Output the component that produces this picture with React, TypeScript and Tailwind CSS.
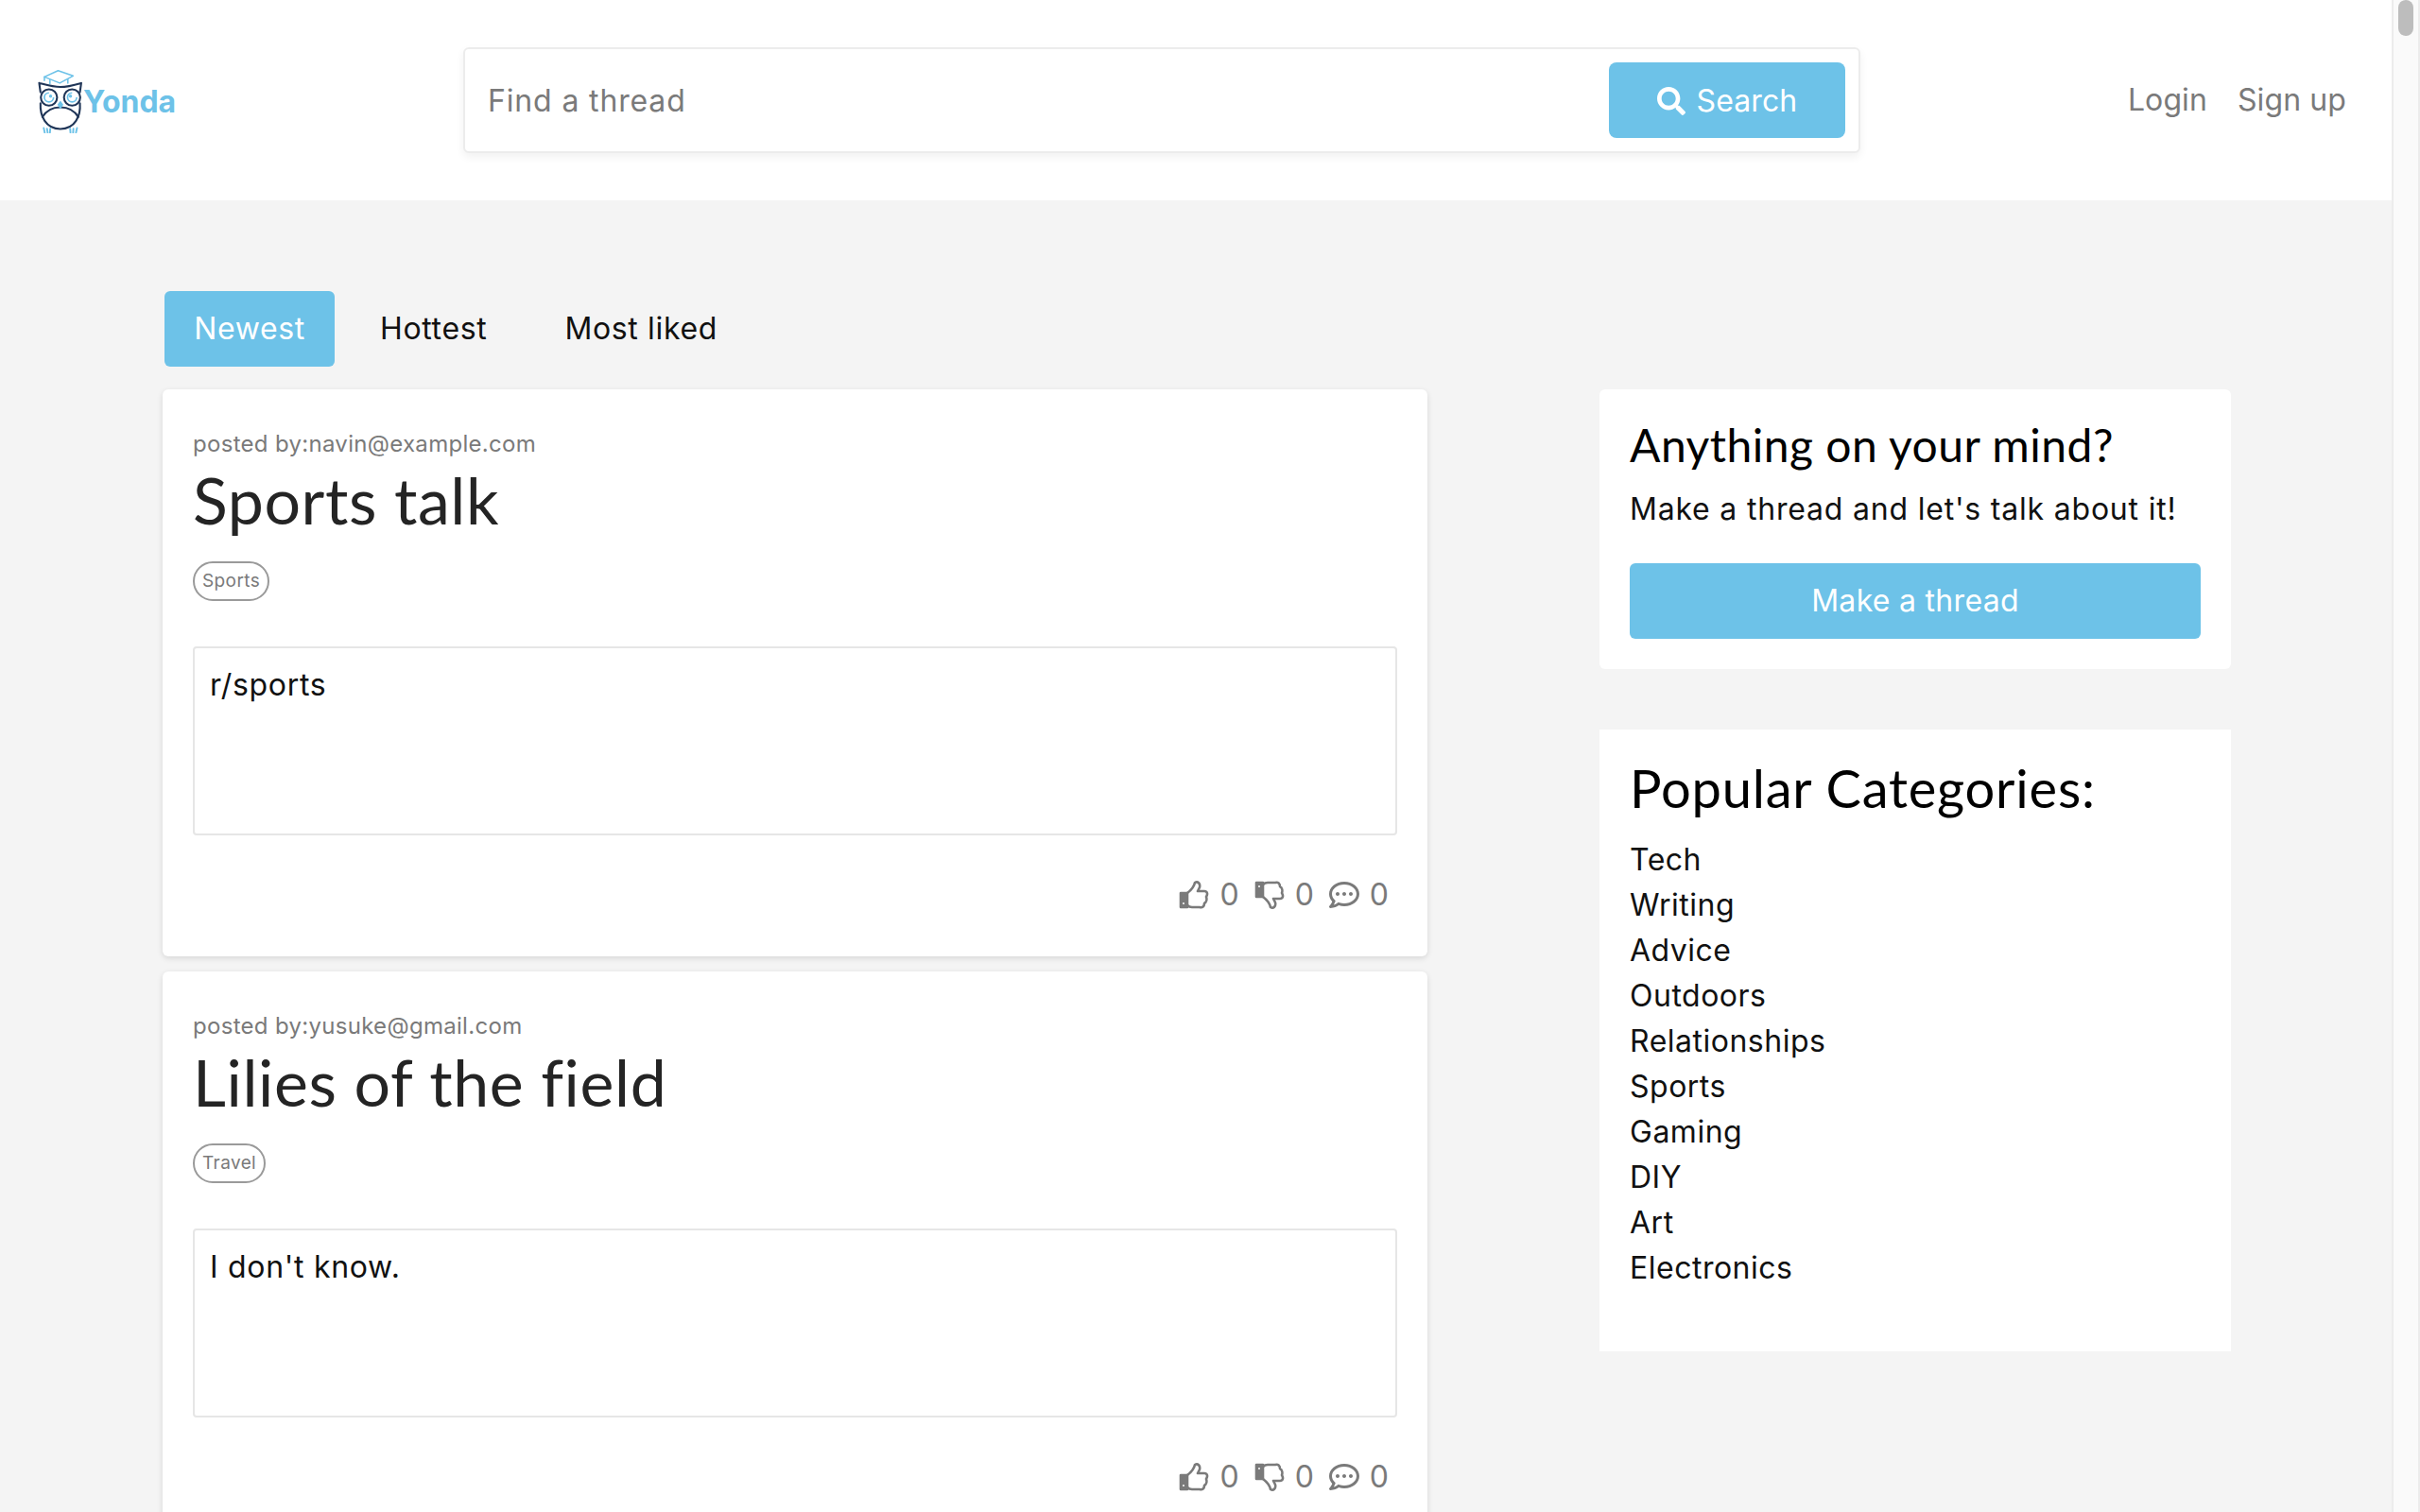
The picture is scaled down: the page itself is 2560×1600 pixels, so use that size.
import { FaSearch, FaRegCommentDots } from 'react-icons/fa';

const threads = [
  { author: 'navin@example.com', title: 'Sports talk', tag: 'Sports', body: 'r/sports' },
  { author: 'yusuke@gmail.com', title: 'Lilies of the field', tag: 'Travel', body: "I don't know." },
];

const categories = ['Tech', 'Writing', 'Advice', 'Outdoors', 'Relationships', 'Sports', 'Gaming', 'DIY', 'Art', 'Electronics'];

const bodyFont = "font-['Inter','Liberation_Sans',sans-serif]";
const headFont = "font-['Lato','Liberation_Sans',sans-serif]";

function Logo() {
  return (
    <svg viewBox="52 35 145 203" className="h-[70px] w-[50px] shrink-0" fill="none">
      {/* cap */}
      <path d="M78 65 L120 46 L166 62 L125 84 Z" stroke="#6dc2e8" strokeWidth="4.5" strokeLinejoin="round" />
      <path d="M95 74 V86 M150 72 V84 M78 65 V76" stroke="#6dc2e8" strokeWidth="4.5" strokeLinecap="round" />
      {/* body */}
      <path d="M62 84 C85 90 105 96 127 96 C149 96 170 90 191 84 L187 112 M62 84 L66 112 M66 146 C64 185 82 225 127 225 C172 225 190 185 187 146" stroke="#1f3557" strokeWidth="6" strokeLinecap="round" strokeLinejoin="round" />
      <path d="M72 188 C84 168 104 158 127 158 C150 158 170 168 182 188" stroke="#1f3557" strokeWidth="6" strokeLinecap="round" />
      {/* eyes */}
      <circle cx="92" cy="128" r="25" stroke="#1f3557" strokeWidth="6" fill="#fff" />
      <circle cx="163" cy="128" r="25" stroke="#1f3557" strokeWidth="6" fill="#fff" />
      <path d="M92 114 A14 14 0 1 0 106 128 M163 114 A14 14 0 1 0 177 128" stroke="#6dc2e8" strokeWidth="5" />
      <circle cx="97" cy="124" r="5" fill="#6dc2e8" />
      <circle cx="158" cy="124" r="5" fill="#6dc2e8" />
      {/* beak */}
      <path d="M127 138 L118 150 L127 164 L136 150 Z" fill="#6dc2e8" />
      {/* feet */}
      <path d="M76 222 L79 236 M86 224 L88 236 M96 224 L95 236 M157 224 L158 236 M167 224 L166 236 M178 222 L175 236" stroke="#6dc2e8" strokeWidth="5.5" strokeLinecap="round" />
    </svg>
  );
}

function ThumbUp({ down }: { down?: boolean }) {
  return (
    <svg viewBox="0 0 32 32" className={`h-[32px] w-[32px] ${down ? '-scale-y-100' : ''}`} fill="none" stroke="#7a7a7a" strokeWidth="2.6" strokeLinejoin="round">
      <path d="M2 14 h7 v15 H2 Z" fill="#7a7a7a" />
      <circle cx="5" cy="25" r="1" fill="#fff" stroke="none" />
      <path d="M9 14 C13 11 16 8 17 3 C20 1 23 4 22 8 L20 12 H27 C30 12 31 15 29 18 C30 21 29 24 27 25 C27 28 25 30 22 29 H14 C12 29 10 28 9 27" />
    </svg>
  );
}

function ThreadCard({ thread }: { thread: (typeof threads)[number] }) {
  return (
    <div className="rounded-[6px] bg-white px-[32px] pt-[44px] pb-[49px] shadow-[0_2px_6px_rgba(10,10,10,0.12)]">
      <div className="text-[24px] leading-[28px] tracking-[0.3px] text-[#7a7a7a]">posted by:{thread.author}</div>
      <h2 className={`${headFont} mt-[5px] text-[68px] leading-[80px] tracking-[0.6px] text-[#242424]`}>{thread.title}</h2>
      <div className="mt-[25px] flex">
        <span className="flex h-[42px] items-center rounded-full border-2 border-[#9a9a9a] px-[8px] pt-[1px] text-[19px] tracking-[0.4px] text-[#7a7a7a]">{thread.tag}</span>
      </div>
      <div className="mt-[48px] h-[200px] rounded-[4px] border-2 border-[#e6e6e6] px-[16px] pt-[20px] text-[32px] leading-[38px] tracking-[0.7px] text-[#111]">{thread.body}</div>
      <div className="mt-[47px] flex h-[32px] items-center justify-end pr-[9px] text-[32px] text-[#7a7a7a]">
        <ThumbUp />
        <span className="mr-[16px] ml-[11px]">0</span>
        <ThumbUp down />
        <span className="mr-[16px] ml-[11px]">0</span>
        <FaRegCommentDots size={32} color="#7a7a7a" />
        <span className="ml-[11px]">0</span>
      </div>
    </div>
  );
}

export default function App() {
  return (
    <div className={`${bodyFont} flex h-screen overflow-hidden bg-[#f4f4f4]`}>
      <div className="min-w-0 flex-1 overflow-hidden">
        <header className="flex h-[212px] items-center bg-white pr-[48px] pl-[38px]">
          <div className="flex w-[452px] items-center">
            <Logo />
            <span className="mt-[3px] text-[32px] font-bold text-[#6dc2e8]">Yonda</span>
          </div>
          <div className="flex h-[112px] w-[1478px] items-center justify-between rounded-[6px] border-2 border-[#ececec] bg-white pr-[14px] pl-[24px] shadow-[0_4px_10px_rgba(10,10,10,0.06)]">
            <span className="pt-[2px] text-[32px] tracking-[0.85px] text-[#7a7a7a]">Find a thread</span>
            <button className="flex h-[80px] w-[250px] items-center justify-center gap-[12px] rounded-[8px] bg-[#6dc2e8] pt-[1px] text-[32px] tracking-[0.1px] text-white">
              <FaSearch size={30} />
              Search
            </button>
          </div>
          <nav className="ml-auto flex gap-[32px] text-[32px] tracking-[0.1px] text-[#7a7a7a]">
            <span>Login</span>
            <span>Sign up</span>
          </nav>
        </header>
        <main className="px-[172px] pt-[96px]">
          <div className="flex h-[80px] pl-[2px] text-[32px] tracking-[0.65px] text-[#111]">
            <span className="flex w-[180px] items-center justify-center rounded-[6px] bg-[#6dc2e8] text-white">Newest</span>
            <span className="flex items-center pr-[48px] pl-[48px]">Hottest</span>
            <span className="flex items-center pl-[34px]">Most liked</span>
          </div>
          <div className="mt-[24px] flex items-start justify-between">
            <div className="flex w-[1338px] flex-col gap-[16px]">
              {threads.map((t) => (
                <ThreadCard key={t.title} thread={t} />
              ))}
            </div>
            <div className="mr-[-2px] flex w-[668px] flex-col gap-[64px]">
              <div className="rounded-[6px] bg-white px-[32px] pt-[31px] pb-[32px]">
                <h3 className={`${headFont} text-[48px] leading-[56px] tracking-[0.5px] text-black`}>Anything on your mind?</h3>
                <p className="mt-[20px] text-[32px] leading-[40px] tracking-[0.8px] text-[#111]">Make a thread and let's talk about it!</p>
                <button className="mt-[37px] h-[80px] w-full rounded-[6px] bg-[#6dc2e8] text-[32px] tracking-[0.3px] text-white">Make a thread</button>
              </div>
              <div className="h-[658px] bg-white px-[32px] pt-[30px] pb-[32px]">
                <h3 className={`${headFont} text-[56px] leading-[64px] tracking-[0.8px] text-black`}>Popular Categories:</h3>
                <ul className="mt-[20px] text-[32px] leading-[48px] tracking-[0.5px] text-[#111]">
                  {categories.map((c) => (
                    <li key={c}>{c}</li>
                  ))}
                </ul>
              </div>
            </div>
          </div>
        </main>
      </div>
      <div className="w-[30px] shrink-0 border-x-2 border-[#ececec] bg-[#fafafa]">
        <div className="mx-auto h-[38px] w-[16px] rounded-full bg-[#bdbdbd]" />
      </div>
    </div>
  );
}
